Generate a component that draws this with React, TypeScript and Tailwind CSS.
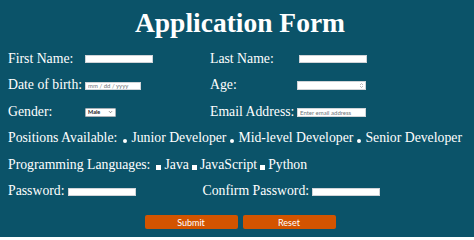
import * as React from 'react';

const serif = "font-['Liberation_Serif','Times_New_Roman',serif]";
const sans = "font-['Lato','Open_Sans',sans-serif]";

const Field: React.FC<{ className?: string; placeholder?: string }> = ({
  className = '',
  placeholder,
}) => (
  <input
    type="text"
    placeholder={placeholder}
    className={`h-[8px] bg-white outline-none border border-[#d0d4d8] px-[2px] text-[6px] text-[#333] placeholder:text-[#6f757a] ${sans} ${className}`}
  />
);

const Radio: React.FC<{ name: string }> = ({ name }) => (
  <input
    type="radio"
    name={name}
    className="appearance-none w-[4px] h-[4px] rounded-full bg-white mt-[5px] mx-[4px]"
  />
);

const Check: React.FC = () => (
  <input type="checkbox" className="appearance-none w-[5px] h-[5px] bg-white mt-[4px] mx-[3px]" />
);

export default function App() {
  return (
    <div className={`w-[474px] h-[237px] bg-[#0b5369] text-white ${serif} text-[13.75px] overflow-hidden`}>
      {/* Title */}
      <div className="h-[46px] flex items-center justify-center pb-[1px] pl-[6px]">
        <h1 className="text-[27.5px] font-bold leading-none">Application Form</h1>
      </div>

      <form className="flex flex-col px-[8px]" onSubmit={(e) => e.preventDefault()}>
        {/* Names */}
        <div className="h-[26.5px] flex items-center">
          <div className="w-[202px] flex items-center">
            <label className="w-[77px]">First Name:</label>
            <Field className="w-[68px]" />
          </div>
          <div className="flex items-center">
            <label className="w-[89px]">Last Name:</label>
            <Field className="w-[68px]" />
          </div>
        </div>

        {/* Birth / age */}
        <div className="h-[26.5px] flex items-center">
          <div className="w-[202px] flex items-center">
            <label className="w-[77px]">Date of birth:</label>
            <Field className="w-[56px]" placeholder="mm / dd / yyyy" />
          </div>
          <div className="flex items-center">
            <label className="w-[87px]">Age:</label>
            <div className="w-[69px] h-[9px] bg-white border border-[#d0d4d8] flex items-center justify-end pr-[1px]">
              <svg width="5" height="7" viewBox="0 0 5 7" className="text-[#8a8f94]">
                <path d="M1 3L2.5 1.5L4 3M1 4L2.5 5.5L4 4" fill="none" stroke="currentColor" strokeWidth="0.6" />
              </svg>
            </div>
          </div>
        </div>

        {/* Gender / email */}
        <div className="h-[26.5px] flex items-center">
          <div className="w-[202px] flex items-center">
            <label className="w-[77px]">Gender:</label>
            <div className={`w-[31px] h-[9px] bg-white border border-[#a9b0b6] rounded-[1px] flex items-center justify-between px-[2px] text-[5.5px] font-bold text-[#222] ${sans}`}>
              <span>Male</span>
              <svg width="5" height="4" viewBox="0 0 5 4" className="text-[#555]">
                <path d="M1 1.2L2.5 2.7L4 1.2" fill="none" stroke="currentColor" strokeWidth="0.7" />
              </svg>
            </div>
          </div>
          <div className="flex items-center">
            <label className="w-[87px]">Email Address:</label>
            <Field className="w-[69px] h-[9px]" placeholder="Enter email address" />
          </div>
        </div>

        {/* Positions */}
        <div className="h-[26.5px] flex items-center">
          <span>Positions Available:</span>
          <span className="w-[2px]" />
          <Radio name="pos" />
          <span>Junior Developer</span>
          <Radio name="pos" />
          <span>Mid-level Developer</span>
          <Radio name="pos" />
          <span>Senior Developer</span>
        </div>

        {/* Languages */}
        <div className="h-[26.5px] flex items-center">
          <span>Programming Languages:</span>
          <span className="w-[3px]" />
          <Check />
          <span>Java</span>
          <Check />
          <span>JavaScript</span>
          <Check />
          <span>Python</span>
        </div>

        {/* Passwords */}
        <div className="h-[26.5px] flex items-center">
          <label>Password:</label>
          <Field className="w-[68px] ml-[3px]" />
          <label className="ml-[67px]">Confirm Password:</label>
          <Field className="w-[68px] ml-[3px]" />
        </div>

        {/* Buttons */}
        <div className={`mt-[10px] flex justify-center gap-[5px] pl-[6px] ${sans} text-[9px]`}>
          <button type="submit" className="w-[93px] h-[14px] bg-[#d35400] rounded-[2px] text-white leading-none">
            Submit
          </button>
          <button type="reset" className="w-[93px] h-[14px] bg-[#d35400] rounded-[2px] text-white leading-none">
            Reset
          </button>
        </div>
      </form>
    </div>
  );
}
